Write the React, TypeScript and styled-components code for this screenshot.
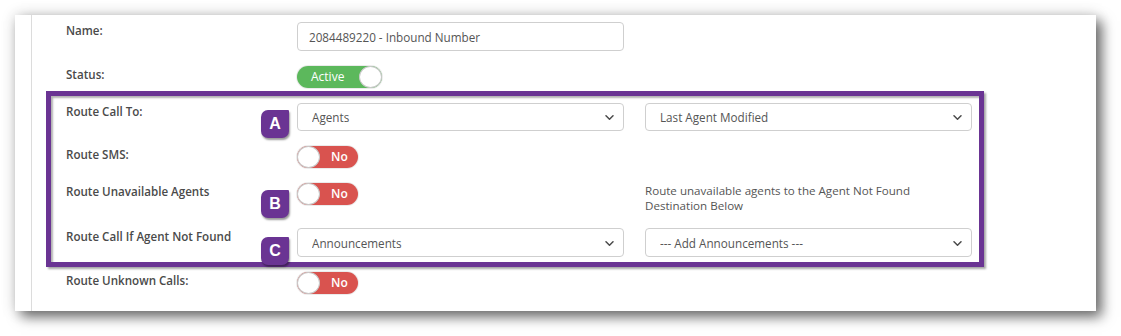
import React from "react";
import styled, { createGlobalStyle } from "styled-components";

const GlobalStyle = createGlobalStyle`
  html, body { margin: 0; padding: 0; background: #ffffff; }
  body { font-family: "Open Sans", "Liberation Sans", sans-serif; }
  * { box-sizing: border-box; }
`;

const PURPLE = "#6a3493";

const Page = styled.div`
  padding: 15px 0 0 15px;
  width: 1121px;
  height: 336px;
`;

const Card = styled.div`
  width: 1081px;
  height: 296px;
  background: #fff;
  display: flex;
  box-shadow: 6px 6px 12px rgba(0, 0, 0, 0.55), 0 0 14px rgba(0, 0, 0, 0.16);
`;

const Gutter = styled.div`
  width: 17px;
  border-right: 1px solid #dcdcdc;
  flex: none;
`;

const Form = styled.div`
  padding: 7px 0 0 34px;
  display: flex;
  flex-direction: column;
  gap: 15px;
`;

const Group = styled.div`
  position: relative;
  display: flex;
  flex-direction: column;
  gap: 15px;
`;

const Frame = styled.div`
  position: absolute;
  top: -12px;
  bottom: -10px;
  left: -20px;
  right: -12px;
  border: 5px solid ${PURPLE};
  box-shadow: 2px 2px 2px rgba(0, 0, 0, 0.35), inset 2px 2px 2px rgba(0, 0, 0, 0.3);
  pointer-events: none;
  z-index: 1;
`;

const Row = styled.div`
  display: grid;
  grid-template-columns: 210px 327px 327px;
  column-gap: 21px;
  align-items: start;
`;

const Label = styled.div`
  font-size: 11.6px;
  font-weight: 600;
  line-height: 17px;
  color: #4a4a4a;
`;

const Cell = styled.div`
  position: relative;
  display: flex;
`;

const Badge = styled.div<{ $top: number }>`
  position: absolute;
  left: -36px;
  top: ${(p) => p.$top}px;
  width: 28px;
  height: 28px;
  border-radius: 7px 1px 7px 7px;
  background: ${PURPLE};
  color: #fff;
  font-family: "Liberation Sans", Arial, sans-serif;
  font-weight: 700;
  font-size: 16px;
  display: flex;
  align-items: center;
  justify-content: center;
  box-shadow: 1px 2px 2px rgba(0, 0, 0, 0.4);
  z-index: 2;
`;

const TextInput = styled.input`
  width: 327px;
  height: 29px;
  border: 1px solid #cfcfcf;
  border-radius: 4px;
  padding: 0 0 0 11px;
  font-family: "Open Sans", sans-serif;
  font-size: 11.7px;
  color: #555;
  background: #fff;
  outline: none;
`;

const SelectWrap = styled.div<{ $h: number }>`
  position: relative;
  width: 327px;
  height: ${(p) => p.$h}px;
`;

const SelectBox = styled.select`
  appearance: none;
  -webkit-appearance: none;
  width: 100%;
  height: 100%;
  border: 1px solid #cfcfcf;
  border-radius: 4px;
  padding: 0 0 0 14px;
  font-family: "Open Sans", sans-serif;
  font-size: 11.7px;
  color: #555;
  background: #fff;
  outline: none;
`;

const Chevron = styled.svg`
  position: absolute;
  right: 10px;
  top: 50%;
  margin-top: -2px;
  pointer-events: none;
`;

const Track = styled.div<{ $on: boolean; $w: number }>`
  width: ${(p) => p.$w}px;
  height: 22px;
  border-radius: 11px;
  background: ${(p) => (p.$on ? "#5cb85c" : "#d9534f")};
  display: flex;
  flex-direction: ${(p) => (p.$on ? "row" : "row-reverse")};
  justify-content: ${(p) => (p.$on ? "space-between" : "flex-end")};
  align-items: center;
  padding-left: ${(p) => (p.$on ? 14 : 0)}px;
  box-shadow: 0 0 0 1px rgba(0, 0, 0, 0.08);
`;

const TrackText = styled.span<{ $on: boolean }>`
  color: #fff;
  font-size: 12px;
  font-weight: ${(p) => (p.$on ? 500 : 600)};
  line-height: 22px;
  margin-left: ${(p) => (p.$on ? 0 : 11)}px;
`;

const Knob = styled.span`
  width: 23px;
  height: 22px;
  border-radius: 50%;
  background: #fff;
  border: 1px solid #c9c9c9;
  flex: none;
`;

const Helper = styled.div`
  font-size: 11.6px;
  line-height: 15px;
  color: #555;
`;

function Toggle({ on, text, width }: { on: boolean; text: string; width: number }) {
  return (
    <Track $on={on} $w={width}>
      <TrackText $on={on}>{text}</TrackText>
      <Knob />
    </Track>
  );
}

function Select({ value, height = 29 }: { value: string; height?: number }) {
  return (
    <SelectWrap $h={height}>
      <SelectBox defaultValue={value}>
        <option>{value}</option>
      </SelectBox>
      <Chevron width="9" height="5" viewBox="0 0 9 5">
        <path d="M1 0.8 L4.5 4.2 L8 0.8" fill="none" stroke="#4a4a4a" strokeWidth="1.5" strokeLinecap="round" strokeLinejoin="round" />
      </Chevron>
    </SelectWrap>
  );
}

export default function App() {
  return (
    <>
      <GlobalStyle />
      <Page>
        <Card>
          <Gutter />
          <Form>
            <Row>
              <Label>Name:</Label>
              <Cell>
                <TextInput defaultValue="2084489220 - Inbound Number" />
              </Cell>
            </Row>
            <Row>
              <Label>Status:</Label>
              <Cell>
                <Toggle on text="Active" width={85} />
              </Cell>
            </Row>
            <Group>
              <Frame />
              <Row>
                <Label>Route Call To:</Label>
                <Cell>
                  <Badge $top={7}>A</Badge>
                  <Select value="Agents" height={28} />
                </Cell>
                <Cell>
                  <Select value="Last Agent Modified" height={28} />
                </Cell>
              </Row>
              <Row>
                <Label>Route SMS:</Label>
                <Cell>
                  <Toggle on={false} text="No" width={61} />
                </Cell>
              </Row>
              <Row>
                <Label>Route Unavailable Agents</Label>
                <Cell>
                  <Badge $top={7}>B</Badge>
                  <Toggle on={false} text="No" width={61} />
                </Cell>
                <Helper>
                  Route unavailable agents to the Agent Not Found
                  <br />
                  Destination Below
                </Helper>
              </Row>
              <Row>
                <Label>Route Call If Agent Not Found</Label>
                <Cell>
                  <Badge $top={9}>C</Badge>
                  <Select value="Announcements" />
                </Cell>
                <Cell>
                  <Select value="--- Add Announcements ---" />
                </Cell>
              </Row>
            </Group>
            <Row>
              <Label>Route Unknown Calls:</Label>
              <Cell>
                <Toggle on={false} text="No" width={61} />
              </Cell>
            </Row>
          </Form>
        </Card>
      </Page>
    </>
  );
}
